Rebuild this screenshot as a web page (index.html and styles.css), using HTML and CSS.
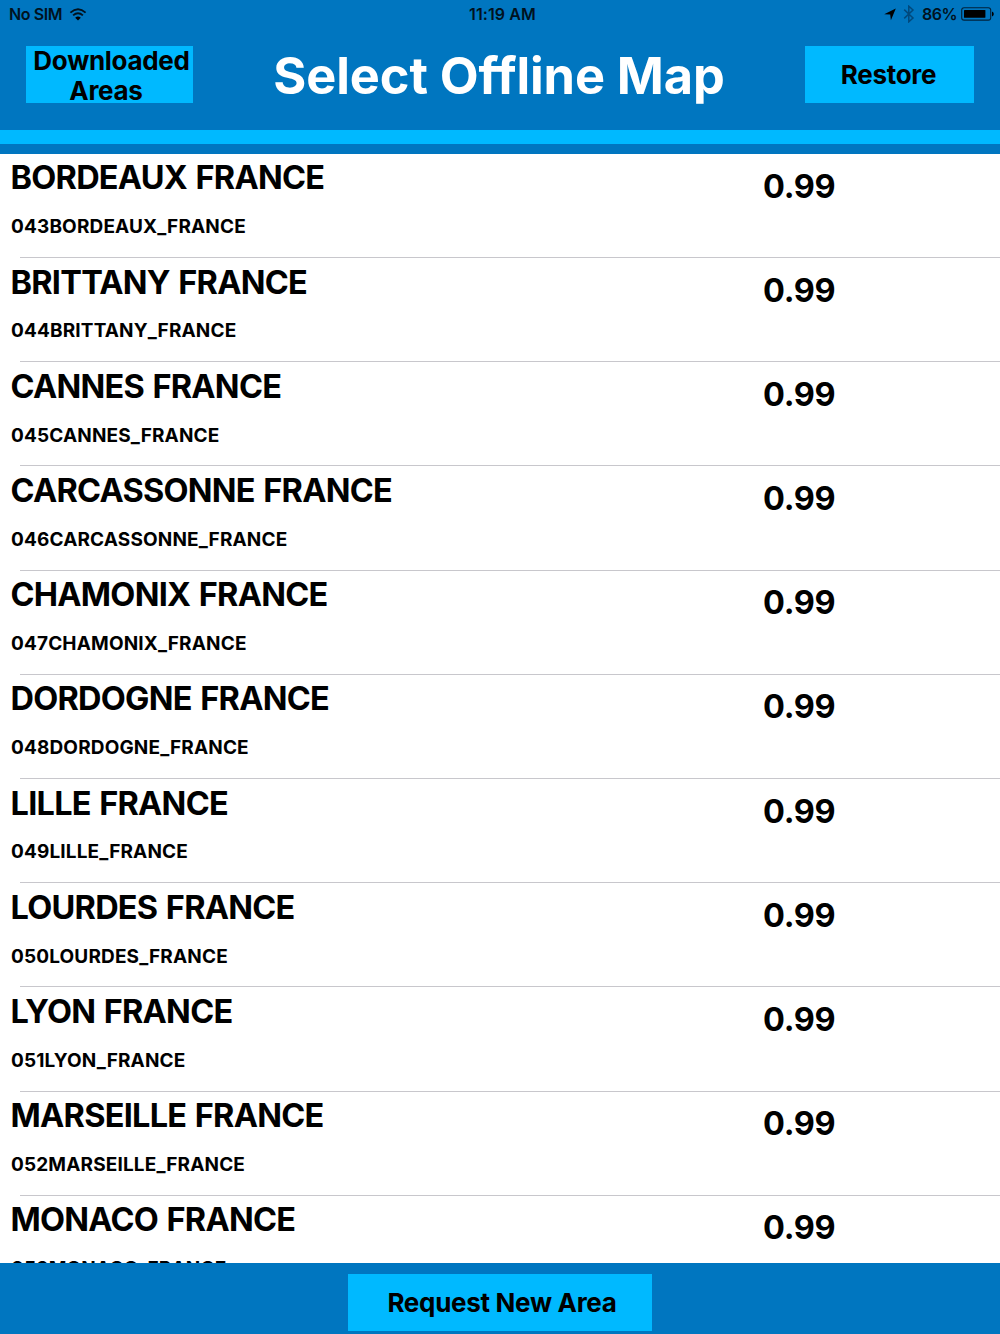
FILE: index.html
```html
<!DOCTYPE html>
<html lang="en">
<head>
    <meta charset="UTF-8">
    <meta name="viewport" content="width=device-width, initial-scale=1.0">
    <title>Select Offline Map</title>
    <link rel="stylesheet" href="styles.css">
</head>
<body>

    <!-- Status bar -->
    <div class="status-bar">
        <div class="status-left">
            <span class="carrier">No SIM</span>
            <svg class="wifi" width="18" height="13" viewBox="0 0 18 13">
                <path d="M1.4 4.6 Q9 -2 16.6 4.6" fill="none" stroke="#00121f" stroke-width="1.9"/>
                <path d="M4.1 7.4 Q9 3.2 13.9 7.4" fill="none" stroke="#00121f" stroke-width="1.9"/>
                <path d="M6.2 9.7 Q9 7.4 11.8 9.7 L9 12.4 Z"/>
            </svg>
        </div>
        <span class="time">11:19 AM</span>
        <div class="status-right">
            <svg class="arrow" width="12" height="13" viewBox="0 0 12 13">
                <path d="M11.8 0.5 L6.9 12.2 L6.2 6.5 L0.2 6.3 Z"/>
            </svg>
            <svg class="bluetooth" width="12" height="18" viewBox="0 0 12 18">
                <path d="M1.2 4.6 L10 13 L5.8 16.8 V1.2 L10 5 L1.2 13.4" fill="none" stroke="#00497c" stroke-width="1.5"/>
            </svg>
            <span class="percent">86%</span>
            <svg class="battery" width="33" height="14" viewBox="0 0 33 14">
                <rect x="0.7" y="0.7" width="29" height="12.4" rx="2.4" fill="none" stroke="#00223b" stroke-width="1.1"/>
                <rect x="3" y="3" width="21.4" height="7.8" rx="0.6"/>
                <path d="M31 4.4 Q32.8 5 32.8 6.9 Q32.8 8.8 31 9.4 Z"/>
            </svg>
        </div>
    </div>

    <header>
        <button class="downloaded">Downloaded<br><span>Areas</span></button>
        <h1>Select Offline Map</h1>
        <button class="restore">Restore</button>
    </header>
    <div class="stripe"></div>

    <!-- List of areas -->
    <ul class="area-list">
        <li><div class="area"><h2>BORDEAUX FRANCE</h2><p>043BORDEAUX_FRANCE</p></div><span class="price">0.99</span></li>
        <li><div class="area"><h2>BRITTANY FRANCE</h2><p>044BRITTANY_FRANCE</p></div><span class="price">0.99</span></li>
        <li><div class="area"><h2>CANNES FRANCE</h2><p>045CANNES_FRANCE</p></div><span class="price">0.99</span></li>
        <li><div class="area"><h2>CARCASSONNE FRANCE</h2><p>046CARCASSONNE_FRANCE</p></div><span class="price">0.99</span></li>
        <li><div class="area"><h2>CHAMONIX FRANCE</h2><p>047CHAMONIX_FRANCE</p></div><span class="price">0.99</span></li>
        <li><div class="area"><h2>DORDOGNE FRANCE</h2><p>048DORDOGNE_FRANCE</p></div><span class="price">0.99</span></li>
        <li><div class="area"><h2>LILLE FRANCE</h2><p>049LILLE_FRANCE</p></div><span class="price">0.99</span></li>
        <li><div class="area"><h2>LOURDES FRANCE</h2><p>050LOURDES_FRANCE</p></div><span class="price">0.99</span></li>
        <li><div class="area"><h2>LYON FRANCE</h2><p>051LYON_FRANCE</p></div><span class="price">0.99</span></li>
        <li><div class="area"><h2>MARSEILLE FRANCE</h2><p>052MARSEILLE_FRANCE</p></div><span class="price">0.99</span></li>
        <li><div class="area"><h2>MONACO FRANCE</h2><p>053MONACO_FRANCE</p></div><span class="price">0.99</span></li>
    </ul>

    <footer>
        <button class="request">Request New Area</button>
    </footer>

</body>
</html>
```

FILE: styles.css
```css
* {
    box-sizing: border-box;
}

body {
    font-family: Inter, "Liberation Sans", sans-serif;
    font-weight: 700;
    color: #000;
    background: #0076c0;
    margin: 0;
    height: 1334px;
    display: flex;
    flex-direction: column;
    overflow: hidden;
}

.status-bar {
    height: 28px;
    flex: none;
    display: grid;
    grid-template-columns: 1fr auto 1fr;
    padding: 0 6px 0 9px;
    align-items: center;
    font-size: 16px;
    font-weight: 600;
    color: #001220;
}

.status-left, .status-right {
    display: flex;
    align-items: center;
}

.status-right {
    justify-content: flex-end;
}

.carrier {
    letter-spacing: -0.4px;
}

.wifi {
    margin-left: 7px;
}

.time {
    padding-left: 2px;
    letter-spacing: 0.1px;
}

.bluetooth {
    margin: 0 7px;
}

.percent {
    letter-spacing: -0.5px;
}

.battery {
    margin-left: 4px;
}

header {
    height: 102px;
    flex: none;
    display: flex;
    justify-content: space-between;
    align-items: flex-start;
    padding: 18px 26px 0;
}

button {
    font-family: inherit;
    font-size: 26px;
    font-weight: 700;
    letter-spacing: -0.3px;
    line-height: 30px;
    height: 57px;
    padding: 0;
    border: none;
    color: #000;
    background: #00b9ff;
    white-space: nowrap;
}

.downloaded {
    width: 167px;
    padding: 0 0 1px 4px;
}

.downloaded span {
    padding-right: 11px;
}

.restore {
    width: 169px;
    padding-right: 2px;
}

h1 {
    margin: 0;
    font-size: 50.5px;
    line-height: 60px;
    font-weight: 700;
    letter-spacing: -0.1px;
    color: #fff;
}

.stripe {
    height: 24px;
    flex: none;
    border-top: 14px solid #00b9ff;
}

.area-list {
    flex: 1;
    min-height: 0;
    overflow: hidden;
    margin: 0;
    padding: 0;
    list-style: none;
    background: #fff;
}

.area-list li {
    display: flex;
    height: 104.2px;
    padding-left: 11px;
    background: linear-gradient(#c8c7cc, #c8c7cc) 20px 103px / 100% 1px no-repeat;
}

.area {
    width: 752px;
    padding-top: 4.4px;
}

h2 {
    margin: 0 0 0 -0.5px;
    font-size: 32.5px;
    line-height: 39px;
    font-weight: 650;
    letter-spacing: -0.75px;
    word-spacing: 1.5px;
}

.area p {
    margin: 17.8px 0 0;
    font-size: 19px;
    line-height: 24px;
    letter-spacing: 0.15px;
}

.price {
    padding-top: 12.5px;
    font-size: 32.5px;
    line-height: 39px;
    letter-spacing: -0.3px;
}

footer {
    height: 71px;
    flex: none;
    display: flex;
    justify-content: center;
    padding-top: 11px;
}

.request {
    width: 304px;
    padding-left: 4px;
}
```
